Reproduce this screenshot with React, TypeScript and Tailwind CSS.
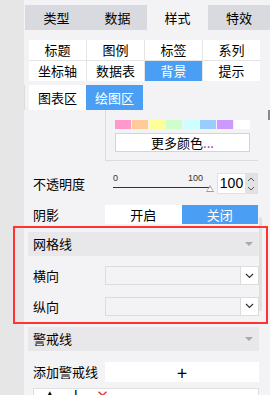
import { useState } from "react";

const FONT = { fontFamily: "'Microsoft YaHei', 'Noto Sans CJK SC', 'Noto Sans', sans-serif" };

const mainTabs = ["类型", "数据", "样式", "特效"];
const subTabs = ["标题", "图例", "标签", "系列", "坐标轴", "数据表", "背景", "提示"];
const swatches = ["#ff99cc", "#ffcc99", "#ffff99", "#ccffcc", "#ccffff", "#99ccff", "#cc99ff", "#ffffff"];

// 折叠面板标题（灰底 + 右侧小三角）
function SectionHeader({ title }: { title: string }) {
  return (
    <div className="flex h-[24px] shrink-0 items-center justify-between bg-[#e8e8ea] pl-[5px] pr-[6px] text-[13px] text-black">
      <span>{title}</span>
      <span className="h-0 w-0 border-x-[4px] border-t-[4px] border-x-transparent border-t-[#a8a8a8]" />
    </div>
  );
}

function Chevron() {
  return (
    <svg width="9" height="6" viewBox="0 0 9 6">
      <path d="M1 1 L4.5 4.5 L8 1" fill="none" stroke="#333" strokeWidth="1.2" />
    </svg>
  );
}

function SelectBox() {
  return (
    <div className="flex h-[19px] flex-1 border border-[#dcdcdc] bg-[#f3f3f5]">
      <div className="flex-1" />
      <div className="flex w-[18px] items-center justify-center border-l border-[#dcdcdc] bg-white">
        <Chevron />
      </div>
    </div>
  );
}

export default function App() {
  const [tab] = useState(2);
  const [sub] = useState(6);

  return (
    <div className="flex h-[395px] w-[270px] overflow-hidden bg-[#f3f3f5] text-black" style={FONT}>
      <div className="w-[24px] shrink-0 bg-[#e6e6e6]" />

      <div className="relative flex flex-1 flex-col pt-[5px]">
        {/* 顶部主 tab */}
        <div className="ml-px grid h-[25px] shrink-0 grid-cols-[63px_59px_61px_62px] text-[13px]">
          {mainTabs.map((t, i) => (
            <div
              key={t}
              className={`flex items-center justify-center ${i === tab ? "bg-[#f3f3f5]" : "bg-[#d9dadf]"}`}
            >
              {t}
            </div>
          ))}
        </div>

        {/* 样式子 tab */}
        <div className="ml-[5px] mt-[10px] grid w-[231px] shrink-0 grid-cols-4 gap-px bg-[#e4e4e6] text-[13px]">
          {subTabs.map((t, i) => (
            <div
              key={t}
              className={`flex h-[20px] items-center justify-center ${i === sub ? "bg-[#4a9ff5] text-white" : "bg-white"}`}
            >
              {t}
            </div>
          ))}
        </div>

        <div className="mt-[4px] flex h-[25px] shrink-0 border-l border-[#dcdcdc] pl-[4px] text-[13px]">
          <div className="flex w-[57px] items-center justify-center bg-white">图表区</div>
          <div className="flex w-[57px] items-center justify-center bg-[#4a9ff5] text-white">绘图区</div>
        </div>

        {/* 颜色面板（上半部分已滚出） */}
        <div className="ml-[81px] mr-[12px] flex h-[51px] shrink-0 flex-col border-b border-l border-[#dcdcdc] pt-[10px] pl-[9px] pr-[8px]">
          <div className="flex h-[9px] gap-px">
            {swatches.map((c) => (
              <div key={c} className="h-full flex-1" style={{ backgroundColor: c }} />
            ))}
          </div>
          <div className="mt-[4px] flex h-[19px] items-center justify-center border border-[#d4d4d4] bg-white text-[13px]">
            更多颜色<span className="text-[#7a2a9a]">...</span>
          </div>
        </div>

        {/* 不透明度 */}
        <div className="mt-[12px] flex h-[21px] shrink-0 items-center pl-[9px] pr-[12px]">
          <span className="w-[76px] text-[13px]">不透明度</span>
          <div className="relative h-[21px] w-[108px]">
            <span className="absolute left-[4px] top-[-1px] text-[9px] text-[#333]" style={{ fontFamily: "'Liberation Sans', sans-serif" }}>0</span>
            <span className="absolute left-[79px] top-[-1px] text-[9px] text-[#333]" style={{ fontFamily: "'Liberation Sans', sans-serif" }}>100</span>
            <div className="absolute left-[4px] top-[14px] h-px w-[97px] bg-[#333]" />
            <span className="absolute left-[97px] top-[12px] h-0 w-0 border-x-[4px] border-b-[7px] border-x-transparent border-b-[#999]" />
            <span className="absolute left-[98px] top-[14px] h-0 w-0 border-x-[3px] border-b-[4px] border-x-transparent border-b-white" />
          </div>
          <div className="flex h-[21px] flex-1 border border-[#e0e0e0]">
            <div className="flex flex-1 items-center justify-center bg-white text-[14px]" style={{ fontFamily: "'Liberation Sans', sans-serif" }}>
              100
            </div>
            <div className="flex w-[12px] flex-col items-center justify-center bg-[#e2e2e4] text-[#555]">
              <svg width="8" height="16" viewBox="0 0 8 16">
                <path d="M1 5 L4 2 L7 5" fill="none" stroke="#555" strokeWidth="1" />
                <path d="M1 11 L4 14 L7 11" fill="none" stroke="#555" strokeWidth="1" />
              </svg>
            </div>
          </div>
        </div>

        {/* 阴影 */}
        <div className="mt-[11px] flex h-[19px] shrink-0 items-center pl-[9px] pr-[12px]">
          <span className="w-[72px] text-[13px]">阴影</span>
          <div className="flex h-full flex-1 text-[13px]">
            <div className="flex flex-1 items-center justify-center bg-white">开启</div>
            <div className="flex flex-1 items-center justify-center bg-[#4a9ff5] text-white">关闭</div>
          </div>
        </div>

        {/* 网格线 */}
        <div className="mt-[8px] flex shrink-0 flex-col pl-[4px] pr-[11px]">
          <SectionHeader title="网格线" />
          <div className="mt-[10px] flex items-center pl-[5px]">
            <span className="w-[72px] text-[13px]">横向</span>
            <SelectBox />
          </div>
          <div className="mt-[11px] flex items-center pl-[5px]">
            <span className="w-[72px] text-[13px]">纵向</span>
            <SelectBox />
          </div>
        </div>

        {/* 警戒线 */}
        <div className="mt-[11px] flex shrink-0 flex-col pl-[4px] pr-[11px]">
          <SectionHeader title="警戒线" />
          <div className="mt-[11px] flex items-center pl-[5px]">
            <span className="w-[72px] text-[13px]">添加警戒线</span>
            <div className="flex h-[20px] flex-1 items-center justify-center bg-white text-[18px] leading-none">
              +
            </div>
          </div>
          <div className="ml-[5px] mt-[6px] flex h-[22px] items-start gap-[14px] border border-[#e0e0e0] bg-white px-[10px] text-[15px] leading-[14px]" style={{ fontFamily: "'DejaVu Sans', sans-serif" }}>
            <span>▲</span>
            <span>↓</span>
            <span className="text-[#e53935]">✕</span>
          </div>
        </div>

        {/* 滚动条 */}
        <div className="absolute right-[8px] top-[217px] h-[94px] w-[3px] rounded-full bg-[#e0e0e2]" />
        <div className="absolute right-0 top-[110px] h-[10px] w-[2px] bg-[#888]" />

        {/* 红色标注框 */}
        <div className="pointer-events-none absolute left-[-11px] top-[226px] h-[98px] w-[255px] border-2 border-[#ff3333]" />
      </div>
    </div>
  );
}
